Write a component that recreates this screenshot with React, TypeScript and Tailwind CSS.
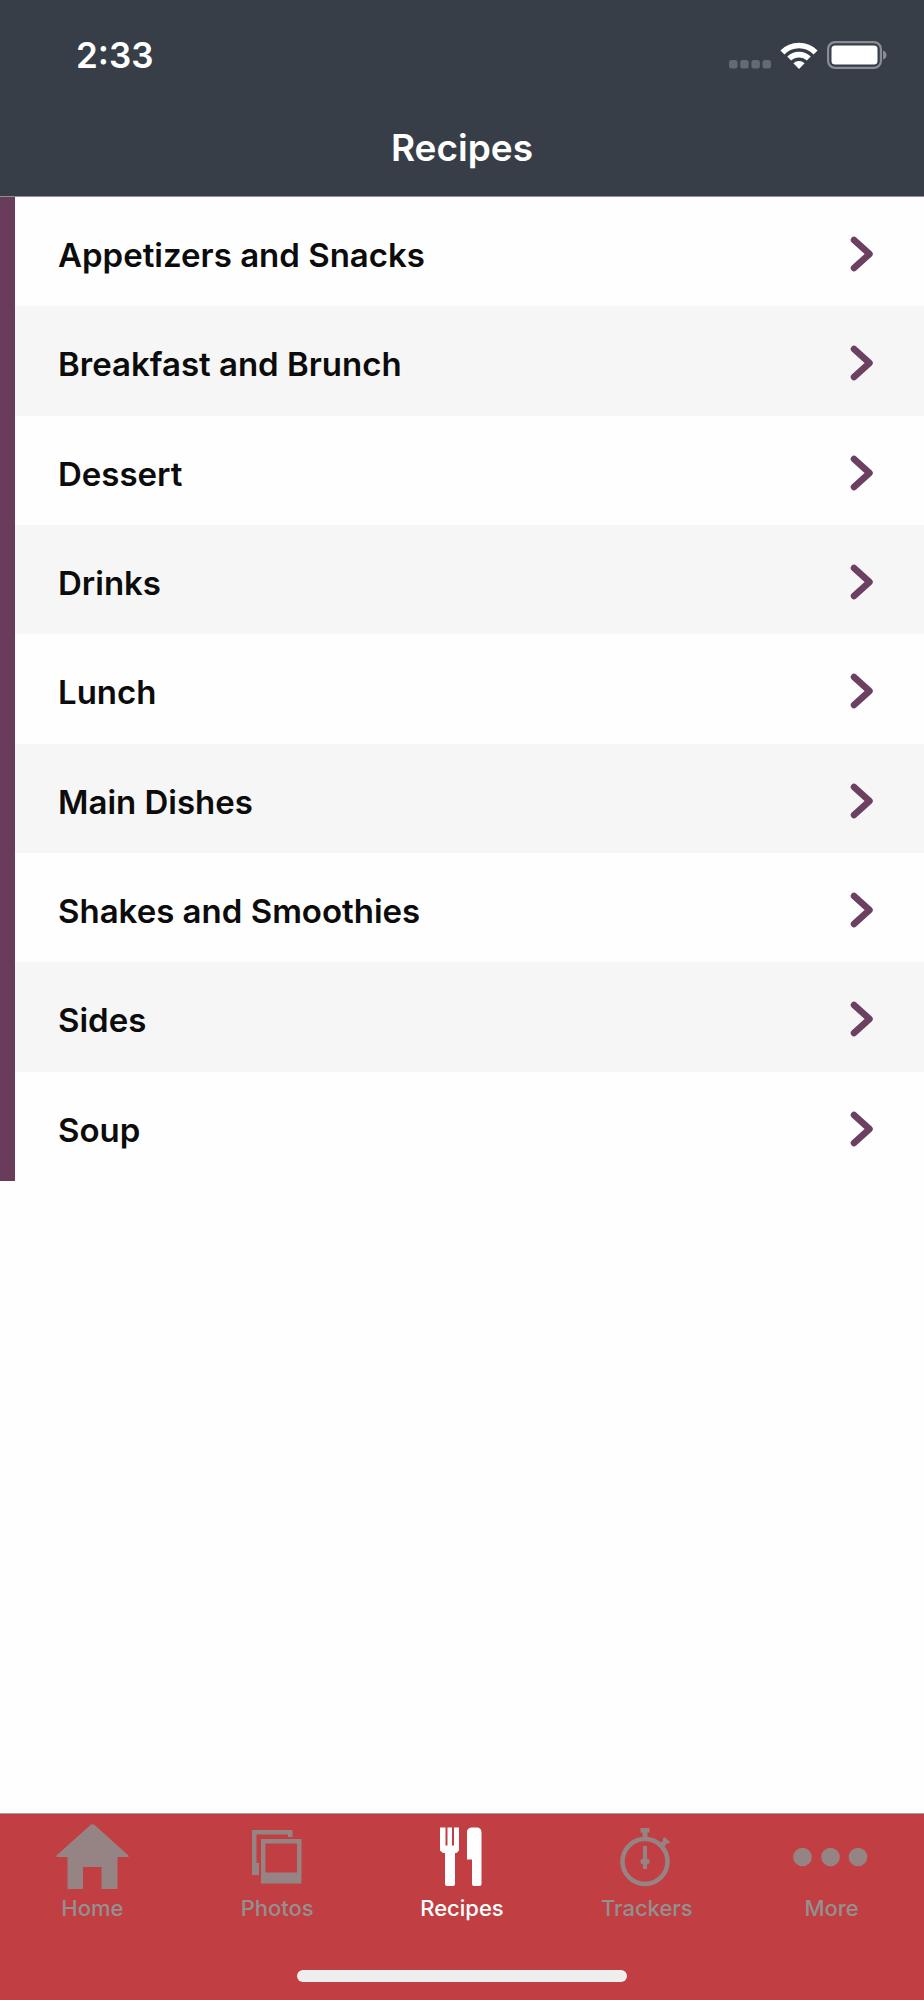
import type { ReactNode } from "react";
import clsx from "clsx";

interface Tab {
  label: string;
  icon: ReactNode;
}

const categories: string[] = [
  "Appetizers and Snacks",
  "Breakfast and Brunch",
  "Dessert",
  "Drinks",
  "Lunch",
  "Main Dishes",
  "Shakes and Smoothies",
  "Sides",
  "Soup",
];

const tabs: Tab[] = [
  {
    label: "Home",
    icon: <path d="M39 2.5 H42 L76.5 33.5 V35 H65.5 V67 H49.5 V45 H31 V67 H15.5 V35 H4.5 V33.5 Z" />,
  },
  {
    label: "Photos",
    icon: (
      <>
        <path d="M15 8 H55.5 V15 H51 V12.5 H19.5 V41 H22 V53 H15 Z" />
        <path fillRule="evenodd" d="M24 17 H64.5 V61.5 H24 Z M28.5 21.5 V50.5 H60 V21.5 Z" />
      </>
    ),
  },
  {
    label: "Recipes",
    icon: (
      <>
        <path d="M18 5.5 H23.5 V23.5 H25.5 V5.5 H30 V23.5 H32 V5.5 H37 V28.5 L34.5 31 H33 V62 Q33 64 31 64 H25 Q23 64 23 62 V31 H21 L18 28.5 Z" />
        <path d="M45 9 Q46 5.5 50 5.5 H55 Q59 5.5 59.5 10 V62 Q59.5 64 57.5 64 H52 Q50 64 50 62 V37.5 H45 Z" />
      </>
    ),
  },
  {
    label: "Trackers",
    icon: (
      <>
        <circle cx="38" cy="39.5" r="22.5" fill="none" stroke="currentColor" strokeWidth="4.5" />
        <path d="M33.5 6 H42.5 V10.5 H40.5 V16 H35.5 V10.5 H33.5 Z" />
        <path d="M36 24 H40 V36.5 L42.5 38 V41 L40 42.5 V47 H36 V42.5 L33.5 41 V38 L36 36.5 Z" />
        <path d="M57.5 15 L63 20 L61.5 21.5 H59.5 L56.5 26.5 L51.5 22 L56 19 V16.5 Z" />
      </>
    ),
  },
  {
    label: "More",
    icon: (
      <>
        <circle cx="10.5" cy="35" r="9.3" />
        <circle cx="38.5" cy="35" r="9.3" />
        <circle cx="66" cy="35" r="9.3" />
      </>
    ),
  },
];

function StatusIcons() {
  return (
    <div className="flex items-center">
      <svg width="42" height="28" viewBox="0 0 42 28" fill="#646a72" aria-hidden="true">
        <rect x="0" y="19" width="8.5" height="8.5" rx="2.5" />
        <rect x="11.2" y="19" width="8.5" height="8.5" rx="2.5" />
        <rect x="22.4" y="19" width="8.5" height="8.5" rx="2.5" />
        <rect x="33.5" y="19" width="8.5" height="8.5" rx="2.5" />
      </svg>
      <svg className="ml-2" width="40" height="28" viewBox="0 0 40 28" aria-hidden="true">
        <g fill="none" stroke="#fff" strokeWidth="5.6">
          <path d="M3.4 11.4 A23.5 23.5 0 0 1 36.6 11.4" />
          <path d="M10.2 17.6 A14 14 0 0 1 29.8 17.6" />
        </g>
        <path d="M20 28 L14.4 22.2 A8 8 0 0 1 25.6 22.2 Z" fill="#fff" />
      </svg>
      <svg className="ml-2" width="60" height="28" viewBox="0 0 60 28" aria-hidden="true">
        <rect x="1.1" y="1.1" width="52.8" height="25.8" rx="7" fill="none" stroke="#898d94" strokeWidth="2.2" />
        <rect x="4.5" y="4.5" width="46" height="19" rx="3.5" fill="#fff" />
        <path d="M56 9.5 Q59.5 10.5 59.5 14 Q59.5 17.5 56 18.5 Z" fill="#898d94" />
      </svg>
    </div>
  );
}

function Header() {
  return (
    <header className="border-b border-[#8d9197] bg-[#373e48] text-white">
      <div className="flex h-[110px] items-center justify-between pr-[37px] pl-[76px]">
        <span className="text-[35px] leading-10 font-semibold">2:33</span>
        <StatusIcons />
      </div>
      <div className="flex h-[86px] justify-center pt-4">
        <h1 className="text-[37px] leading-11 font-semibold">Recipes</h1>
      </div>
    </header>
  );
}

function CategoryList() {
  return (
    <ul className="border-l-[15px] border-[#683c5a]">
      {categories.map((name) => (
        <li key={name} className="h-[109px] even:bg-[#f6f6f6] nth-[3n+2]:h-[110px]">
          <a href="#" className="flex h-full items-center justify-between pt-1 pr-[50px] pl-[43px]">
            <span className="pt-0.5 text-[33px] leading-10 font-semibold text-[#0c0c0c]">{name}</span>
            <svg width="24" height="36" viewBox="0 0 24 36" fill="none" aria-hidden="true">
              <path
                d="M4 4 L19.5 18 L4 32"
                stroke="#6b4060"
                strokeWidth="6.5"
                strokeLinecap="round"
                strokeLinejoin="round"
              />
            </svg>
          </a>
        </li>
      ))}
    </ul>
  );
}

function TabBar({ active }: { active: string }) {
  return (
    <nav className="border-t border-[#a89a9a] bg-[#c13f42] pb-[18px]">
      <div className="grid grid-cols-5 pt-2">
        {tabs.map(({ label, icon }) => (
          <button
            key={label}
            type="button"
            className={clsx("flex flex-col items-center", label === active ? "text-white" : "text-[#968484]")}
          >
            <svg width="80" height="72" viewBox="0 0 80 72" fill="currentColor" aria-hidden="true">
              {icon}
            </svg>
            <span className={clsx("text-[22px] leading-7 font-medium", label !== active && "text-[#949090]")}>
              {label}
            </span>
          </button>
        ))}
      </div>
      <div className="mx-auto mt-12 h-3 w-[330px] rounded-full bg-[#eeeeee]" />
    </nav>
  );
}

export default function App() {
  return (
    <div className="flex min-h-screen flex-col bg-[#fefefe] font-['Inter',sans-serif]">
      <Header />
      <main className="flex-1">
        <CategoryList />
      </main>
      <TabBar active="Recipes" />
    </div>
  );
}
